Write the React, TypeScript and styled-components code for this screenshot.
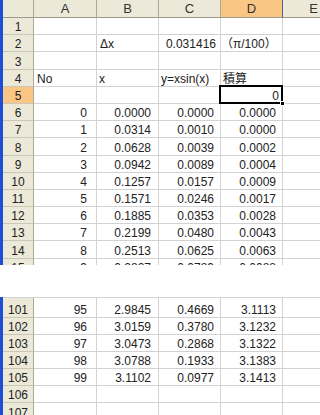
import styled, { createGlobalStyle } from 'styled-components';

const GlobalStyle = createGlobalStyle`
  html, body {
    margin: 0;
    padding: 0;
    background: #fff;
  }
  body {
    font-family: "Liberation Sans", "Noto Sans CJK JP", sans-serif;
  }
`;

type Align = 'left' | 'right' | 'center';

interface CellData {
  text: string;
  align?: Align;
  pad?: number;
  selected?: boolean;
}

interface RowData {
  num: number;
  cells: CellData[];
  current?: boolean;
}

const Sheet = styled.div`
  display: flex;
  flex-direction: column;
  width: 320px;
  height: 415px;
  overflow: hidden;
`;

const Pane = styled.div<{ $height?: number }>`
  display: flex;
  flex-shrink: 0;
  overflow: hidden;
  height: ${(p) => (p.$height ? `${p.$height}px` : 'auto')};
  flex: ${(p) => (p.$height ? '0 0 auto' : '1')};
`;

const SplitGap = styled.div`
  flex: 0 0 32px;
  background: #fff;
`;

const WindowEdge = styled.div`
  width: 3px;
  flex-shrink: 0;
  background: #1d4fd6;
`;

const Grid = styled.div<{ $rows: string; $topLine?: boolean }>`
  display: grid;
  grid-template-columns: 31px 63px 62px 62px 62px 62px;
  grid-template-rows: ${(p) => p.$rows};
  grid-auto-rows: 17.2px;
  align-content: start;
  border-top: ${(p) => (p.$topLine ? '1px solid #d2d2d2' : 'none')};
`;

const ColHead = styled.div<{ $selected?: boolean }>`
  box-sizing: border-box;
  display: flex;
  align-items: center;
  justify-content: center;
  font-size: 13px;
  color: #333;
  background: ${(p) => (p.$selected ? '#f9c684' : '#ece9d8')};
  border-right: 1px solid ${(p) => (p.$selected ? '#4a5f9c' : '#aca899')};
  border-bottom: 1px solid #9d9a8a;
`;

const RowHead = styled.div<{ $selected?: boolean }>`
  box-sizing: border-box;
  display: flex;
  align-items: flex-end;
  justify-content: center;
  font-size: 12px;
  line-height: 13px;
  color: #222;
  background: ${(p) => (p.$selected ? '#f9c684' : '#ece9d8')};
  border-right: 1px solid #aca899;
  border-bottom: 1px solid #cbc7b8;
`;

const Cell = styled.div<{ $align: Align; $pad: number; $selected?: boolean }>`
  position: relative;
  box-sizing: border-box;
  display: flex;
  align-items: flex-end;
  justify-content: ${(p) =>
    p.$align === 'right' ? 'flex-end' : p.$align === 'center' ? 'center' : 'flex-start'};
  padding: 0 ${(p) => (p.$align === 'right' ? p.$pad : 0)}px 0
    ${(p) => (p.$align === 'left' ? p.$pad : 0)}px;
  font-size: 12px;
  line-height: 13px;
  color: #222;
  white-space: nowrap;
  border-right: 1px solid #d2d2d2;
  border-bottom: 1px solid #d2d2d2;

  ${(p) =>
    p.$selected &&
    `
    &::after {
      content: '';
      position: absolute;
      left: -2px;
      top: -2px;
      right: -1px;
      bottom: -1px;
      border: 2px solid #000;
    }
    &::before {
      content: '';
      position: absolute;
      right: -3px;
      bottom: -3px;
      width: 5px;
      height: 5px;
      background: #000;
      border: 1px solid #fff;
      box-sizing: border-box;
      z-index: 1;
    }
  `}
`;

const columns = ['A', 'B', 'C', 'D', 'E'];

const num = (a: string, b: string, c: string, d: string): CellData[] => [
  { text: a, align: 'right', pad: 9 },
  { text: b, align: 'right', pad: 7 },
  { text: c, align: 'right', pad: 6 },
  { text: d, align: 'right', pad: 6 },
  { text: '' },
];

const empty = (): CellData[] => columns.map(() => ({ text: '' }));

const topRows: RowData[] = [
  { num: 1, cells: empty() },
  {
    num: 2,
    cells: [
      { text: '' },
      { text: 'Δx', align: 'left', pad: 3 },
      { text: '0.031416', align: 'right', pad: 4 },
      { text: '（π/100）', align: 'left', pad: 0 },
      { text: '' },
    ],
  },
  { num: 3, cells: empty() },
  {
    num: 4,
    cells: [
      { text: 'No', align: 'left', pad: 3 },
      { text: 'x', align: 'left', pad: 2 },
      { text: 'y=xsin(x)', align: 'left', pad: 2 },
      { text: '積算', align: 'left', pad: 2 },
      { text: '' },
    ],
  },
  {
    num: 5,
    current: true,
    cells: [
      { text: '' },
      { text: '' },
      { text: '' },
      { text: '0', align: 'right', pad: 3, selected: true },
      { text: '' },
    ],
  },
  { num: 6, cells: num('0', '0.0000', '0.0000', '0.0000') },
  { num: 7, cells: num('1', '0.0314', '0.0010', '0.0000') },
  { num: 8, cells: num('2', '0.0628', '0.0039', '0.0002') },
  { num: 9, cells: num('3', '0.0942', '0.0089', '0.0004') },
  { num: 10, cells: num('4', '0.1257', '0.0157', '0.0009') },
  { num: 11, cells: num('5', '0.1571', '0.0246', '0.0017') },
  { num: 12, cells: num('6', '0.1885', '0.0353', '0.0028') },
  { num: 13, cells: num('7', '0.2199', '0.0480', '0.0043') },
  { num: 14, cells: num('8', '0.2513', '0.0625', '0.0063') },
  { num: 15, cells: num('9', '0.2827', '0.0789', '0.0088') },
];

const bottomRows: RowData[] = [
  { num: 101, cells: num('95', '2.9845', '0.4669', '3.1113') },
  { num: 102, cells: num('96', '3.0159', '0.3780', '3.1232') },
  { num: 103, cells: num('97', '3.0473', '0.2868', '3.1322') },
  { num: 104, cells: num('98', '3.0788', '0.1933', '3.1383') },
  { num: 105, cells: num('99', '3.1102', '0.0977', '3.1413') },
  { num: 106, cells: empty() },
  { num: 107, cells: empty() },
];

const Rows = ({ rows }: { rows: RowData[] }) => (
  <>
    {rows.map((row) => [
      <RowHead key={`h${row.num}`} $selected={row.current}>
        {row.num}
      </RowHead>,
      ...row.cells.map((cell, i) => (
        <Cell
          key={`c${row.num}-${i}`}
          $align={cell.align ?? 'left'}
          $pad={cell.pad ?? 0}
          $selected={cell.selected}
        >
          {cell.text}
        </Cell>
      )),
    ])}
  </>
);

export default function App() {
  return (
    <>
      <GlobalStyle />
      <Sheet>
        <Pane $height={265}>
          <WindowEdge />
          <Grid $rows="18px">
            <ColHead />
            {columns.map((c) => (
              <ColHead key={c} $selected={c === 'D'}>
                {c}
              </ColHead>
            ))}
            <Rows rows={topRows} />
          </Grid>
        </Pane>
        <SplitGap />
        <Pane>
          <WindowEdge />
          <Grid $rows="19.5px" $topLine>
            <Rows rows={bottomRows} />
          </Grid>
        </Pane>
      </Sheet>
    </>
  );
}
